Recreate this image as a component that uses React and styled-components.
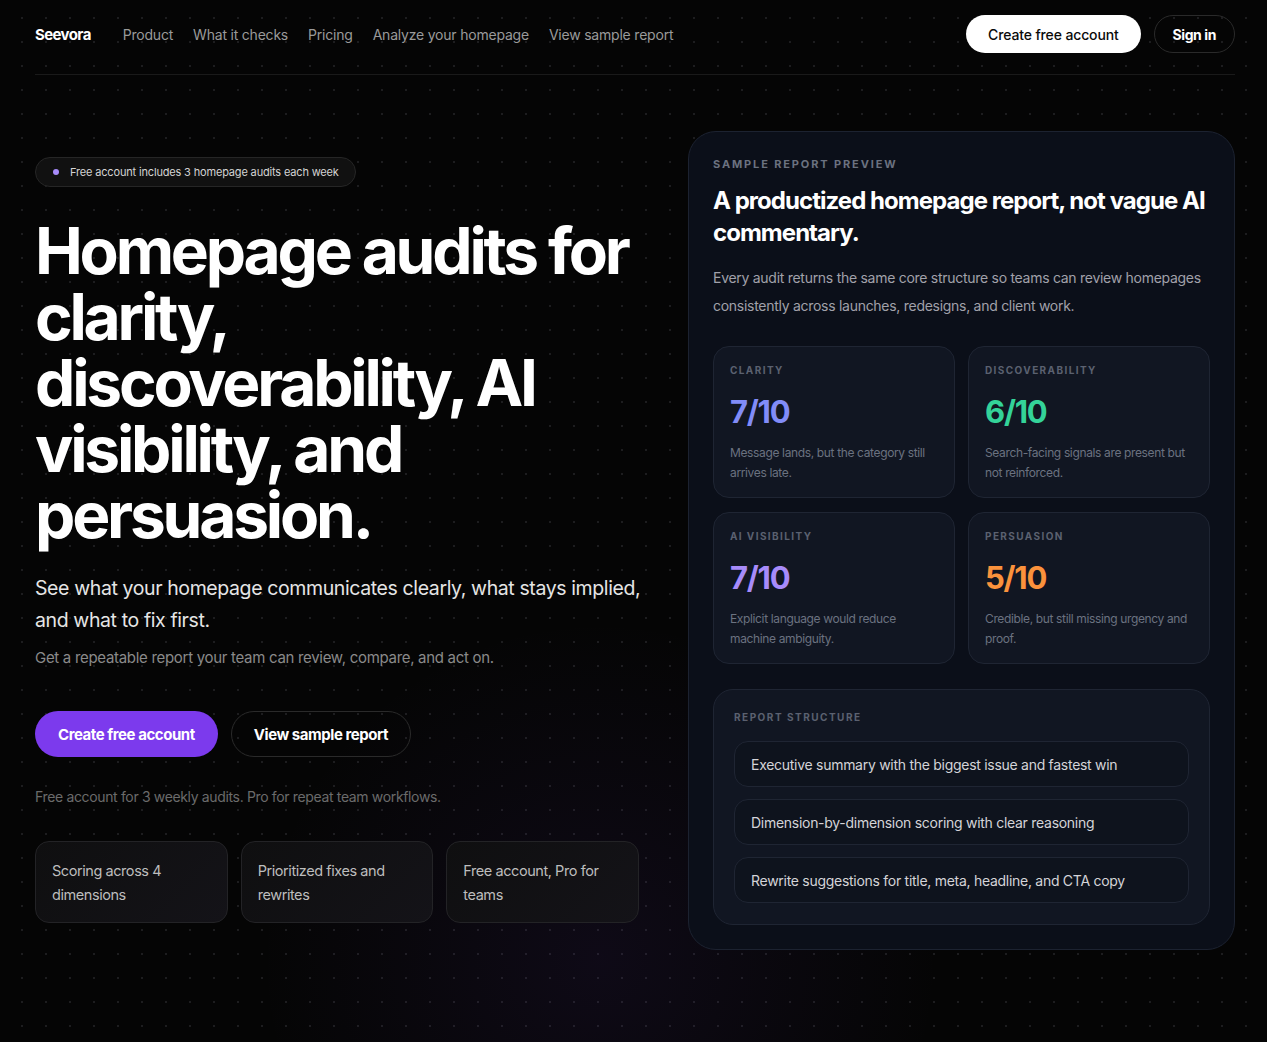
import React from 'react';
import styled, {createGlobalStyle} from 'styled-components';

const GlobalStyle = createGlobalStyle`
    html, body {
        margin: 0;
        padding: 0;
        background: #050505;
    }
    body {
        font-family: Inter, "Liberation Sans", Arial, sans-serif;
        color: #fff;
        -webkit-font-smoothing: antialiased;
    }
    * { box-sizing: border-box; }
`;

const Page = styled.div`
    min-height: 1042px;
    background-color: #050505;
    background-image:
        radial-gradient(circle at 600px 960px, rgba(110, 60, 200, 0.09), transparent 340px),
        radial-gradient(circle, #1d1d1f 1px, transparent 1.3px);
    background-size: 100% 100%, 24px 24px;
    background-position: 0 0, 10px 6px;
    padding: 0 32px 0 35px;
`;

const Nav = styled.header`
    display: flex;
    align-items: flex-start;
    justify-content: space-between;
    height: 75px;
    padding-top: 15px;
    border-bottom: 1px solid #1a1a1a;
`;

const NavLeft = styled.div`
    display: flex;
    align-items: center;
    height: 38px;
    gap: 20px;
`;

const Logo = styled.div`
    font-size: 15px;
    font-weight: 700;
    letter-spacing: -0.04em;
    margin-right: 12px;
`;

const NavLink = styled.a`
    font-size: 14px;
    color: #9a9a9a;
    text-decoration: none;
    letter-spacing: -0.015em;
`;

const NavRight = styled.div`
    display: flex;
    align-items: center;
    gap: 13px;
`;

const PillButton = styled.a`
    display: inline-flex;
    align-items: center;
    justify-content: center;
    height: ${p => p.$h || 38}px;
    padding: 0 ${p => p.$px || 21}px;
    border-radius: 999px;
    font-size: ${p => p.$fs || 14}px;
    font-weight: ${p => p.$weight || 500};
    letter-spacing: ${p => p.$ls || '-0.03em'};
    text-decoration: none;
    white-space: nowrap;
    color: ${p => p.$variant === 'light' ? '#0a0a0a' : '#fff'};
    background: ${p => p.$variant === 'light' ? '#fff' : p.$variant === 'purple' ? '#7c3aed' : 'transparent'};
    border: 1px solid ${p => p.$variant === 'ghost' ? '#2a2a2a' : 'transparent'};
`;

const Hero = styled.main`
    display: grid;
    grid-template-columns: 1fr 547px;
    gap: 40px;
    padding-top: 56px;
`;

const Left = styled.section`
    padding-top: 26px;
`;

const Badge = styled.div`
    display: inline-flex;
    align-items: center;
    gap: 11px;
    height: 30px;
    padding: 0 16px 0 17px;
    border-radius: 999px;
    border: 1px solid #262626;
    background: #111;
    font-size: 11px;
    color: #d4d4d4;
    letter-spacing: -0.015em;
`;

const Dot = styled.span`
    width: 6px;
    height: 6px;
    border-radius: 50%;
    background: #a78bfa;
`;

const Headline = styled.h1`
    margin: 31px 0 0;
    font-size: 64px;
    line-height: 66px;
    font-weight: 700;
    letter-spacing: -0.05em;
    color: #fff;
    max-width: 640px;
`;

const Lead = styled.p`
    margin: 24px 0 0;
    font-size: 19.5px;
    line-height: 32px;
    color: #e5e5e5;
    letter-spacing: -0.02em;
    max-width: 612px;
`;

const Sub = styled.p`
    margin: 10px 0 0;
    font-size: 15px;
    line-height: 24px;
    color: #8a8a8a;
    letter-spacing: -0.02em;
`;

const Actions = styled.div`
    display: flex;
    gap: 13px;
    margin-top: 41px;
`;

const Note = styled.p`
    margin: 31px 0 0;
    font-size: 14px;
    color: #6b6b6b;
    letter-spacing: -0.025em;
`;

const Features = styled.div`
    display: grid;
    grid-template-columns: repeat(3, 1fr);
    gap: 13px;
    margin-top: 36px;
    max-width: 604px;
`;

const Feature = styled.div`
    height: 82px;
    padding: 17px 16px;
    border-radius: 14px;
    border: 1px solid #232326;
    background: linear-gradient(135deg, #0f0f10, #141318);
    font-size: 14.5px;
    line-height: 24px;
    color: #bdbdbd;
    letter-spacing: -0.03em;
`;

const Panel = styled.aside`
    border-radius: 28px;
    border: 1px solid #1c2230;
    background: #0b0f19;
    padding: 25px 24px 24px;
`;

const Eyebrow = styled.div`
    font-size: ${p => p.$fs || 11}px;
    font-weight: 700;
    letter-spacing: ${p => p.$ls || '0.17em'};
    text-transform: uppercase;
    color: ${p => p.$color || '#6b7280'};
`;

const PanelTitle = styled.h2`
    margin: 14px 0 0;
    font-size: 24px;
    line-height: 32px;
    font-weight: 700;
    letter-spacing: -0.04em;
    color: #fff;
`;

const PanelText = styled.p`
    margin: 15px 0 0;
    font-size: 14px;
    line-height: 28px;
    color: #a1a1aa;
    letter-spacing: -0.02em;
`;

const ScoreGrid = styled.div`
    display: grid;
    grid-template-columns: 1fr 1fr;
    gap: 14px 13px;
    margin-top: 26px;
`;

const ScoreCard = styled.div`
    height: 152px;
    padding: 17px 16px;
    border-radius: 16px;
    border: 1px solid #1f2533;
    background: #111622;
`;

const Score = styled.div`
    margin-top: 17px;
    font-size: 31px;
    font-weight: 700;
    letter-spacing: -0.04em;
    color: ${p => p.$color};
`;

const ScoreText = styled.p`
    margin: 13px 0 0;
    font-size: 12px;
    line-height: 20px;
    color: #6b7280;
    letter-spacing: -0.03em;
`;

const Structure = styled.div`
    margin-top: 25px;
    padding: 21px 20px 21px;
    border-radius: 20px;
    border: 1px solid #1f2533;
    background: #111622;
`;

const StructureList = styled.div`
    display: flex;
    flex-direction: column;
    gap: 12px;
    margin-top: 18px;
`;

const StructureItem = styled.div`
    height: 46px;
    display: flex;
    align-items: center;
    padding: 0 16px;
    border-radius: 14px;
    border: 1px solid #1f2533;
    background: #0e131d;
    font-size: 14px;
    color: #d4d4d8;
    letter-spacing: -0.02em;
`;

const scores = [
    {label: 'Clarity', value: '7/10', color: '#818cf8', text: 'Message lands, but the category still arrives late.'},
    {label: 'Discoverability', value: '6/10', color: '#34d399', text: 'Search-facing signals are present but not reinforced.'},
    {label: 'AI visibility', value: '7/10', color: '#a78bfa', text: 'Explicit language would reduce machine ambiguity.'},
    {label: 'Persuasion', value: '5/10', color: '#fb923c', text: 'Credible, but still missing urgency and proof.'}
];

const structure = [
    'Executive summary with the biggest issue and fastest win',
    'Dimension-by-dimension scoring with clear reasoning',
    'Rewrite suggestions for title, meta, headline, and CTA copy'
];

export default function App() {
    return (
        <Page>
            <GlobalStyle/>
            <Nav>
                <NavLeft>
                    <Logo>Seevora</Logo>
                    <NavLink href="#">Product</NavLink>
                    <NavLink href="#">What it checks</NavLink>
                    <NavLink href="#">Pricing</NavLink>
                    <NavLink href="#">Analyze your homepage</NavLink>
                    <NavLink href="#">View sample report</NavLink>
                </NavLeft>
                <NavRight>
                    <PillButton $variant="light" $px={21} $ls="-0.01em" href="#">Create free account</PillButton>
                    <PillButton $variant="ghost" $weight={700} $px={18} href="#">Sign in</PillButton>
                </NavRight>
            </Nav>

            <Hero>
                <Left>
                    <Badge><Dot/>Free account includes 3 homepage audits each week</Badge>
                    <Headline>
                        Homepage audits for clarity, discoverability, AI visibility, and persuasion.
                    </Headline>
                    <Lead>See what your homepage communicates clearly, what stays implied, and what to fix first.</Lead>
                    <Sub>Get a repeatable report your team can review, compare, and act on.</Sub>
                    <Actions>
                        <PillButton $variant="purple" $h={46} $px={22} $fs={15} $weight={700} href="#">Create free account</PillButton>
                        <PillButton $variant="ghost" $h={46} $px={22} $fs={15} $weight={700} href="#">View sample report</PillButton>
                    </Actions>
                    <Note>Free account for 3 weekly audits. Pro for repeat team workflows.</Note>
                    <Features>
                        <Feature>Scoring across 4 dimensions</Feature>
                        <Feature>Prioritized fixes and rewrites</Feature>
                        <Feature>Free account, Pro for teams</Feature>
                    </Features>
                </Left>

                <Panel>
                    <Eyebrow>Sample report preview</Eyebrow>
                    <PanelTitle>A productized homepage report, not vague AI commentary.</PanelTitle>
                    <PanelText>
                        Every audit returns the same core structure so teams can review homepages consistently across launches, redesigns, and client work.
                    </PanelText>
                    <ScoreGrid>
                        {scores.map(s => (
                            <ScoreCard key={s.label}>
                                <Eyebrow $fs={10} $ls="0.14em" $color="#5b6170">{s.label}</Eyebrow>
                                <Score $color={s.color}>{s.value}</Score>
                                <ScoreText>{s.text}</ScoreText>
                            </ScoreCard>
                        ))}
                    </ScoreGrid>
                    <Structure>
                        <Eyebrow $fs={10} $ls="0.15em" $color="#5b6170">Report structure</Eyebrow>
                        <StructureList>
                            {structure.map(item => (
                                <StructureItem key={item}>{item}</StructureItem>
                            ))}
                        </StructureList>
                    </Structure>
                </Panel>
            </Hero>
        </Page>
    );
}
